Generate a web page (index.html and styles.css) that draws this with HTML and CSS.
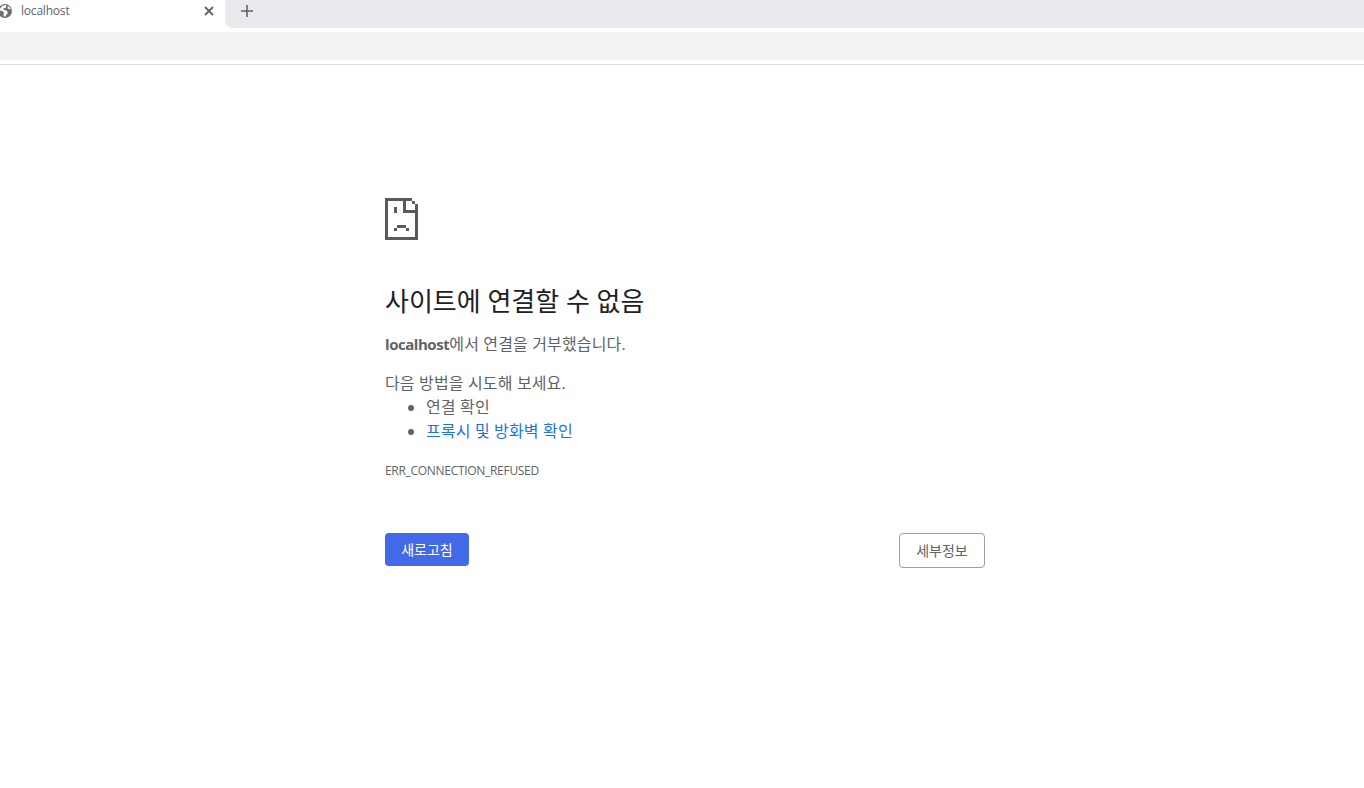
FILE: index.html
```html
<!DOCTYPE html>
<html lang="ko">

<head>
  <meta charset="UTF-8" />
  <title>localhost</title>
  <link rel="stylesheet" href="styles.css">
</head>

<body>
  <div class="tab-strip">
    <div class="tab">
      <svg class="tab-globe" width="14" height="14" viewBox="0 0 14 14">
        <circle cx="7" cy="7" r="7" fill="#6e7073" />
        <path d="M8 1 4.5 1.8 2.5 4 1.5 6.5 4.5 7 6 8.5 5.5 11.5 7 13 8.5 10.5 10 9 8.5 6.5 5.5 6 5.5 4.2 8 3.8z" fill="#fff" />
        <path d="M9.8 1.8 9.5 4.5 12.8 5.5A6 6 0 0 0 9.8 1.8z" fill="#fff" />
      </svg>
      <span class="tab-title">localhost</span>
      <svg class="tab-close" width="10" height="10" viewBox="0 0 10 10">
        <path d="M1 1l8 8M9 1 1 9" stroke="#5f6368" stroke-width="1.8" fill="none" />
      </svg>
    </div>
    <div class="tab-rest">
      <svg class="tab-new" width="12" height="12" viewBox="0 0 12 12">
        <path d="M6 0v12M0 6h12" stroke="#5f6368" stroke-width="1.6" fill="none" />
      </svg>
    </div>
  </div>
  <div class="toolbar"></div>

  <main class="error-page">
    <svg class="sad-file" width="33" height="42" viewBox="0 0 33 42">
      <path fill="#5a5a5a" fill-rule="evenodd" d="M0 0H27V3H30V6H33V42H0ZM3 3V39H30V15H18V3ZM21 3V12H30V6H27V3Z" />
      <path fill="#5a5a5a" d="M9 9h3v6H9zM12 27h9v3h-9zM9 30h3v3H9zM21 30h3v3h-3z" />
    </svg>

    <h1 class="error-title">사이트에 연결할 수 없음</h1>
    <p class="error-summary"><strong>localhost</strong>에서 연결을 거부했습니다.</p>
    <p class="error-try">다음 방법을 시도해 보세요.</p>
    <ul class="error-list">
      <li>연결 확인</li>
      <li><a href="#">프록시 및 방화벽 확인</a></li>
    </ul>
    <div class="error-code">ERR_CONNECTION_REFUSED</div>

    <div class="error-buttons">
      <button class="btn-reload">새로고침</button>
      <button class="btn-details">세부정보</button>
    </div>
  </main>
</body>

</html>
```

FILE: styles.css
```css
* {
  box-sizing: border-box;
}

body {
  margin: 0;
  background-color: white;
  color: #5f6368;
  font-family: "Open Sans", "Noto Sans CJK KR", sans-serif;
  font-size: 16px;
  letter-spacing: 0.15px;
}

.tab-strip {
  display: flex;
  height: 32px;
}

.tab {
  display: flex;
  align-items: flex-start;
  width: 225px;
  padding-top: 4px;
}

.tab-globe {
  margin-left: -2px;
  flex-shrink: 0;
}

.tab-title {
  margin-left: 9px;
  font-size: 12px;
  line-height: 14px;
  letter-spacing: -0.2px;
  flex: 1;
}

.tab-close {
  margin: 2px 11px 0 0;
}

.tab-rest {
  flex: 1;
  height: 28px;
  padding: 5px 0 0 16px;
  background-color: #e8eaed;
  border-bottom-left-radius: 8px;
}

.tab-new {
  display: block;
}

.toolbar {
  height: 33px;
  border-bottom: 1px solid #dadce0;
  background: linear-gradient(#f1f3f4 28px, white 28px);
}

.error-page {
  width: 600px;
  margin-left: 385px;
  padding-top: 133px;
}

.sad-file {
  display: block;
}

.error-title {
  margin: 45px 0 0;
  color: #202124;
  font-size: 26px;
  font-weight: 400;
  line-height: 32px;
  letter-spacing: 0;
}

.error-summary {
  margin: 15px 0 0;
  line-height: 24px;
}

.error-summary strong {
  font-size: 15px;
  letter-spacing: -0.45px;
}

.error-try {
  margin: 15px 0 0;
  line-height: 24px;
}

.error-list {
  margin: 0;
  padding-left: 41px;
}

.error-list li {
  line-height: 24px;
}

.error-list a {
  color: #1a73e8;
  text-decoration: none;
}

.error-code {
  margin-top: 20px;
  font-size: 12px;
  line-height: 16px;
  letter-spacing: -0.3px;
}

.error-buttons {
  display: flex;
  justify-content: space-between;
  align-items: flex-start;
  margin-top: 54px;
}

.error-buttons button {
  padding: 0 0 2px;
  font-family: inherit;
  font-size: 14px;
  border-radius: 4px;
}

.btn-reload {
  width: 84px;
  height: 33px;
  border: none;
  background-color: #4169e8;
  color: white;
}

.btn-details {
  width: 86px;
  height: 35px;
  border: 1px solid #9aa0a6;
  background-color: white;
  color: #5f6368;
}
```
